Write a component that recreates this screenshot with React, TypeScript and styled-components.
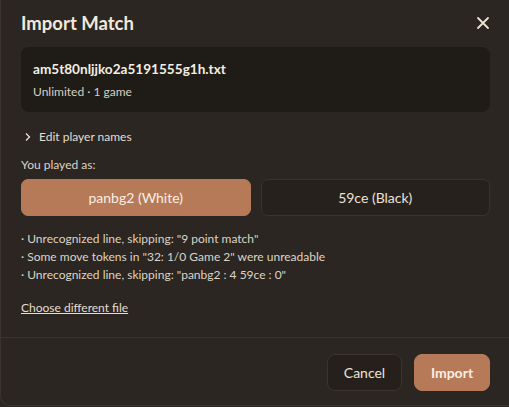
import { useState } from 'react';
import type { FC } from 'react';
import styled, { createGlobalStyle } from 'styled-components';

const GlobalStyle = createGlobalStyle`
  html, body {
    margin: 0;
    padding: 0;
    background: #2b2621;
  }
  body {
    font-family: Lato, 'Noto Sans', sans-serif;
    color: #ece3d4;
  }
`;

const warnings = [
  'Unrecognized line, skipping: "9 point match"',
  'Some move tokens in "32: 1/0 Game 2" were unreadable',
  'Unrecognized line, skipping: "panbg2 : 4 59ce : 0"',
];

const App: FC = () => {
  const [side, setSide] = useState<'white' | 'black'>('white');
  return (
    <>
      <GlobalStyle />
      <Dialog>
        <Header>
          <Title>Import Match</Title>
          <CloseButton aria-label="Close">
            <svg width="14" height="14" viewBox="0 0 14 14">
              <path d="M2 2 L12 12 M12 2 L2 12" stroke="#ece3d4" strokeWidth="1.8" strokeLinecap="round" />
            </svg>
          </CloseButton>
        </Header>
        <Body>
          <FileCard>
            <FileName>am5t80nljjko2a5191555g1h.txt</FileName>
            <FileMeta>Unlimited · 1 game</FileMeta>
          </FileCard>
          <Disclosure>
            <svg width="8" height="10" viewBox="0 0 8 10">
              <path d="M2 1.5 L5.5 5 L2 8.5" stroke="#ece3d4" strokeWidth="1.3" fill="none" />
            </svg>
            Edit player names
          </Disclosure>
          <FieldLabel>You played as:</FieldLabel>
          <SideRow>
            <SideButton active={side === 'white'} onClick={() => setSide('white')}>
              panbg2 (White)
            </SideButton>
            <SideButton active={side === 'black'} onClick={() => setSide('black')}>
              59ce (Black)
            </SideButton>
          </SideRow>
          <WarningList>
            {warnings.map((w) => (
              <li key={w}>· {w}</li>
            ))}
          </WarningList>
          <LinkButton>Choose different file</LinkButton>
        </Body>
        <Footer>
          <GhostButton>Cancel</GhostButton>
          <PrimaryButton>Import</PrimaryButton>
        </Footer>
      </Dialog>
    </>
  );
};

export default App;

const Dialog = styled.div`
  width: 520px;
  height: 406px;
  box-sizing: border-box;
  background: #2b2621;
  border-left: 1px solid #3b342d;
  border-bottom: 1px solid #3b342d;
  border-bottom-left-radius: 10px;
  display: flex;
  flex-direction: column;
`;

const Header = styled.header`
  display: flex;
  align-items: center;
  justify-content: space-between;
  padding: 5px 30px 0 20px;
  height: 36px;
`;

const Title = styled.h1`
  margin: 0;
  font-size: 18.5px;
  font-weight: 700;
  color: #f1e9dc;
`;

const CloseButton = styled.button`
  background: none;
  border: none;
  padding: 0;
  display: flex;
  cursor: pointer;
`;

const Body = styled.div`
  padding: 6px 30px 0 20px;
  flex: 1;
`;

const FileCard = styled.div`
  background: #1f1b17;
  border-radius: 8px;
  padding: 11px 12px 10px;
  margin-bottom: 16px;
`;

const FileName = styled.div`
  font-size: 13.6px;
  font-weight: 700;
  color: #f4ede2;
  line-height: 22px;
`;

const FileMeta = styled.div`
  font-size: 12px;
  color: #d8cfc1;
  margin-top: 2px;
  line-height: 20px;
`;

const Disclosure = styled.div`
  display: flex;
  align-items: center;
  gap: 7px;
  font-size: 12px;
  line-height: 18px;
  padding-left: 3px;
  margin-bottom: 10px;
  color: #e6ddcf;
`;

const FieldLabel = styled.div`
  font-size: 12px;
  line-height: 18px;
  color: #ddd4c6;
  margin-bottom: 5px;
`;

const SideRow = styled.div`
  display: grid;
  grid-template-columns: 1fr 1fr;
  gap: 10px;
  margin-bottom: 14px;
`;

const SideButton = styled.button<{ active: boolean }>`
  height: 37px;
  border-radius: 7px;
  font-family: inherit;
  font-size: 14px;
  cursor: pointer;
  color: ${(p) => (p.active ? '#f7efe4' : '#ece3d4')};
  background: ${(p) => (p.active ? '#b67a58' : '#26211d')};
  border: 1px solid ${(p) => (p.active ? '#b67a58' : '#3a332c')};
`;

const WarningList = styled.ul`
  list-style: none;
  margin: 0 0 12px;
  padding: 0;
  font-size: 12px;
  line-height: 18px;
  color: #ddd4c6;
`;

const LinkButton = styled.button`
  background: none;
  border: none;
  padding: 0;
  font-family: inherit;
  font-size: 12px;
  line-height: 18px;
  color: #e6ddcf;
  text-decoration: underline;
  cursor: pointer;
`;

const Footer = styled.footer`
  border-top: 1px solid #3a332c;
  display: flex;
  justify-content: flex-end;
  gap: 12px;
  padding: 16px 30px 14px 20px;
`;

const GhostButton = styled.button`
  height: 37px;
  width: 75px;
  border-radius: 8px;
  background: #25201c;
  border: 1px solid #3a342d;
  font-family: inherit;
  font-size: 14px;
  color: #ece3d4;
  cursor: pointer;
`;

const PrimaryButton = styled.button`
  height: 37px;
  width: 76px;
  border-radius: 8px;
  background: #b67a58;
  border: 1px solid #b67a58;
  font-family: inherit;
  font-size: 14px;
  font-weight: 700;
  color: #f7efe4;
  cursor: pointer;
`;
